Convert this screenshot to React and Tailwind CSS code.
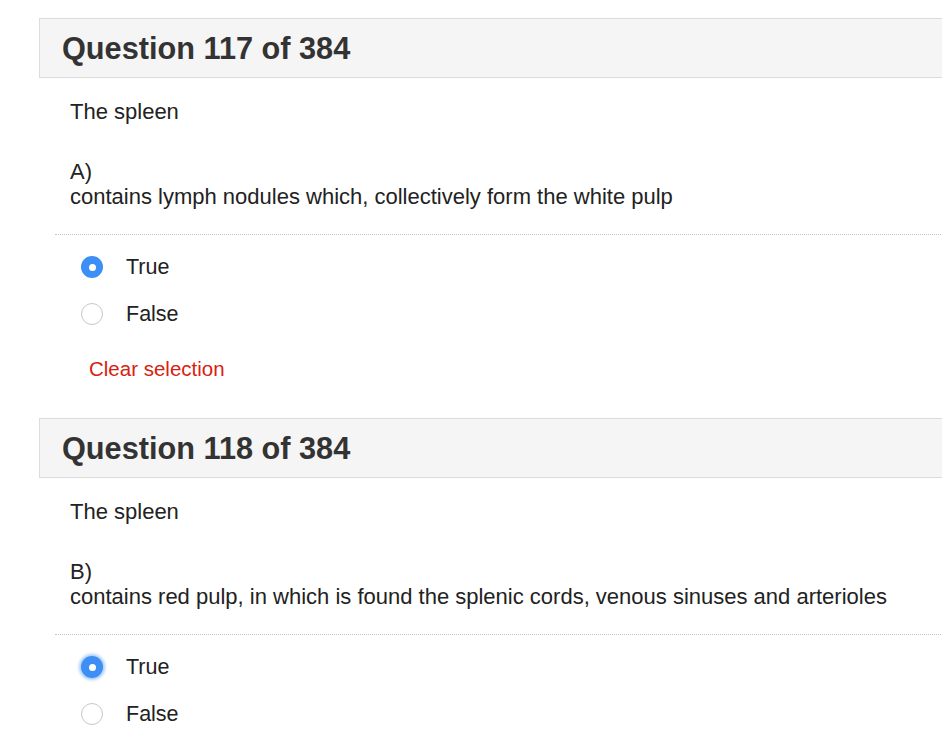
import React from "react";

function Radio({ checked, glow }) {
  if (checked) {
    return (
      <span
        className={
          "flex h-[22px] w-[22px] items-center justify-center rounded-full bg-[#3d8ff5] " +
          (glow ? "shadow-[0_0_3px_2px_rgba(61,143,245,0.45)]" : "")
        }
      >
        <span className="h-[7px] w-[7px] rounded-full bg-white" />
      </span>
    );
  }
  return <span className="block h-[22px] w-[22px] rounded-full border border-[#c8c8c8] bg-white" />;
}

function Question({ num, letter, text, first, glow, clear }) {
  return (
    <div className={first ? "pt-[18px]" : "pt-[37px]"}>
      <div className="flex h-[60px] items-center border border-[#dcdcdc] bg-[#f5f5f5] pl-[22px]">
        <h2 className="pt-[2px] text-[30.7px] font-bold leading-none text-[#333]">
          Question {num} of 384
        </h2>
      </div>
      <div className="pl-[31px] text-[22px] leading-[25px] text-[#222]">
        <p className="mt-[21px]">The spleen</p>
        <p className="mt-[35px]">{letter})</p>
        <p>{text}</p>
      </div>
      <div className="ml-[16px] mt-[25px] border-t border-dotted border-[#c4c4c4]" />
      <div className="ml-[42px] mt-[21px] flex flex-col gap-[25px] text-[21.5px] leading-[22px] text-[#222]">
        <div className="flex items-center gap-[23px]">
          <Radio checked glow={glow} />
          <span>True</span>
        </div>
        <div className="flex items-center gap-[23px]">
          <Radio />
          <span>False</span>
        </div>
      </div>
      {clear && (
        <div className="ml-[50px] mt-[31px] text-[20.5px] leading-[25px] text-[#d8210e]">
          Clear selection
        </div>
      )}
    </div>
  );
}

export default function App() {
  return (
    <div
      className="h-[750px] w-[942px] overflow-hidden bg-white"
      style={{ fontFamily: '"Liberation Sans", Arial, sans-serif' }}
    >
      <div className="ml-[39px] w-[930px]">
        <Question
          num={117}
          letter="A"
          text="contains lymph nodules which, collectively form the white pulp"
          first
          clear
        />
        <Question
          num={118}
          letter="B"
          text="contains red pulp, in which is found the splenic cords, venous sinuses and arterioles"
          glow
        />
      </div>
    </div>
  );
}
